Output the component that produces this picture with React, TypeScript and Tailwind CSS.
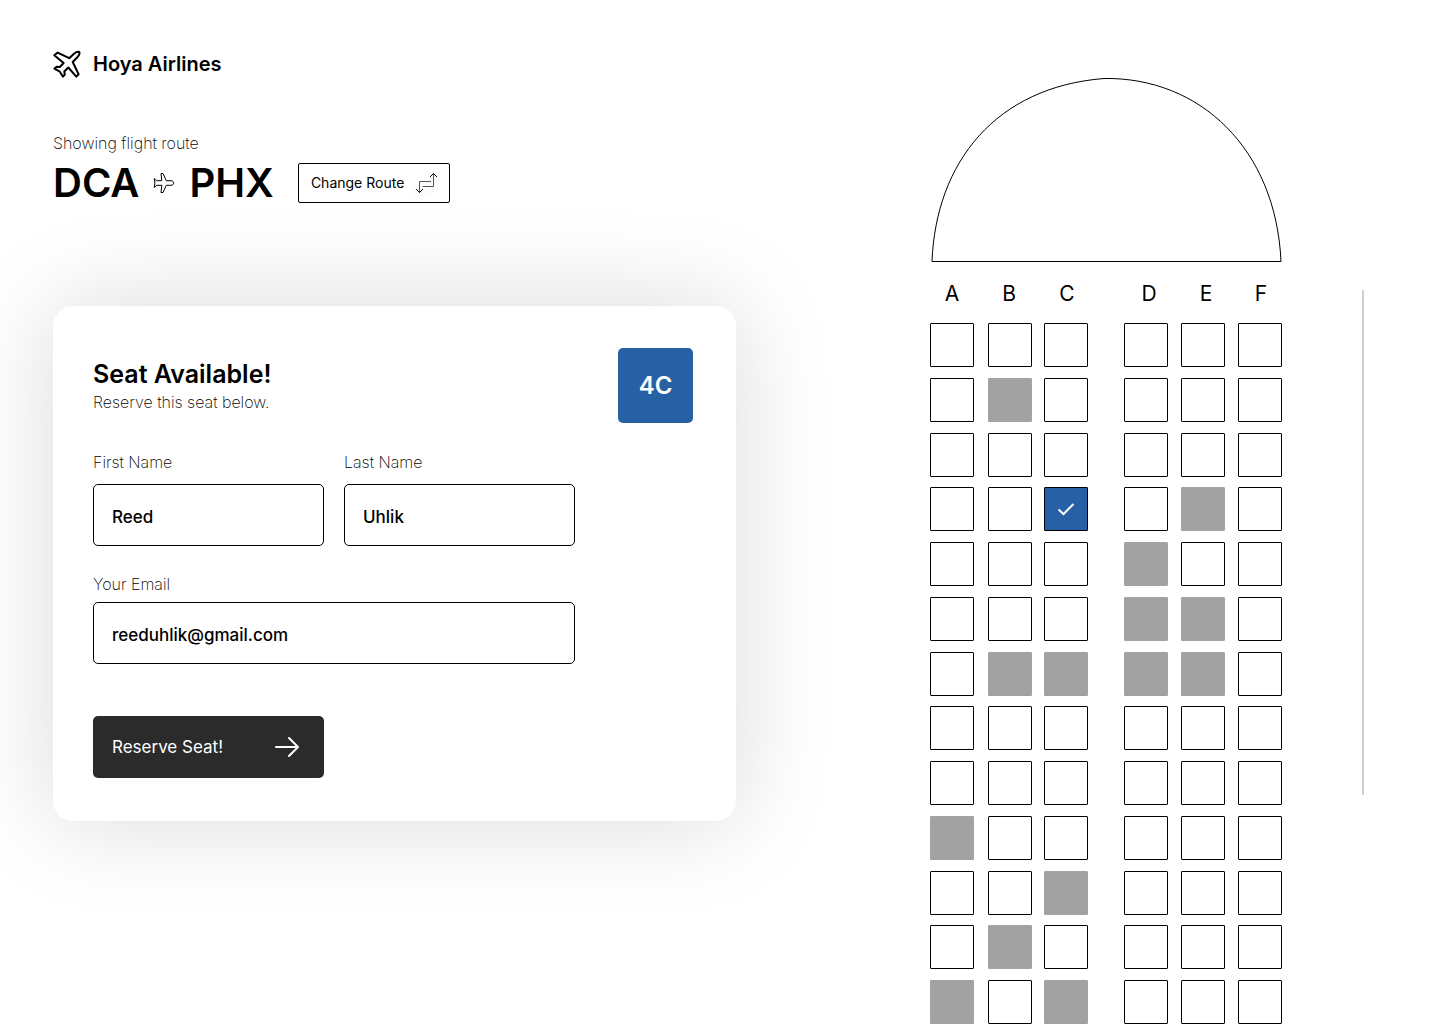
import { useState } from "react";

const SANS = "font-['Inter',sans-serif]";

const TAKEN = new Set(["2B", "4E", "5D", "6D", "6E", "7B", "7C", "7D", "7E", "10A", "11C", "12B", "13A", "13C"]);
const ROWS = Array.from({ length: 13 }, (_, i) => i + 1);
const COLUMNS = ["A", "B", "C", "D", "E", "F"];

function LogoPlane() {
  return (
    <svg viewBox="0 0 28 28" className="size-7" fill="none" stroke="currentColor" strokeWidth="2" strokeLinejoin="round" aria-hidden="true">
      <path d="M1.3 5.2 4.6 2.6 16.2 8.2 21 3.7C22.8 2.2 25.400 1.600 26.200 2 26.700 2.900 26.300 5 24.800 6.700L19.700 12 25.600 24.200 23.300 26.600 15.300 17.500 11.300 21.500 11.800 24.600 10 26.600 6.800 21.700 1.500 18.600 3.600 16.800 6.800 17 10.600 13Z" />
    </svg>
  );
}

function RoutePlane() {
  return (
    <svg viewBox="0 0 22 22" className="size-[22px]" fill="none" stroke="currentColor" strokeWidth="1" strokeLinejoin="round" aria-hidden="true">
      <path d="M8 1.5h2l3.300 7.200h4.700c1.500 0 2.700 1.200 2.700 2.300s-1.200 2.300-2.700 2.300h-4.700L10 20.500H8l.8-7.200H3.500L1.300 15.500 1.900 11 1.300 6.500 3.500 8.700h5.300z" />
    </svg>
  );
}

function Seat({ id, selected, onSelect }: { id: string; selected: boolean; onSelect: (id: string) => void }) {
  const taken = TAKEN.has(id);
  const look = taken
    ? "border-[#a2a2a2] bg-[#a2a2a2]"
    : selected
      ? "border-black bg-[#2760a4]"
      : "border-black bg-white";
  return (
    <button
      type="button"
      aria-label={`Seat ${id}`}
      aria-pressed={selected}
      disabled={taken}
      onClick={() => onSelect(id)}
      className={`flex size-11 items-center justify-center rounded-[1px] border text-white ${look}`}
    >
      {selected && (
        <svg viewBox="0 0 18 14" className="h-3.5 w-[18px]" fill="none" stroke="currentColor" strokeWidth="2" aria-hidden="true">
          <path d="M1.5 7.5 6.5 12 16.5 2" />
        </svg>
      )}
    </button>
  );
}

function Field({ id, label, value, type, gap }: { id: string; label: string; value: string; type: string; gap: string }) {
  return (
    <div className={`flex flex-col ${gap}`}>
      <label htmlFor={id} className="text-base leading-6 font-extralight">{label}</label>
      <input
        id={id}
        type={type}
        defaultValue={value}
        className="h-[62px] w-full rounded-[5px] border border-black bg-white px-[18px] pt-1 text-[17px] font-medium outline-none"
      />
    </div>
  );
}

export default function App() {
  const [seat, setSeat] = useState("4C");

  return (
    <main className={`flex min-h-screen bg-white pr-[76px] pl-[53px] text-black ${SANS}`}>
      <section className="min-w-0 flex-1 pt-[50px]">
        <header className="flex items-center gap-3">
          <LogoPlane />
          <span className="text-xl leading-7 font-semibold">Hoya Airlines</span>
        </header>

        <p className="mt-[53px] text-base leading-6 font-extralight">Showing flight route</p>
        <div className="flex h-[56px] items-center">
          <h1 className="flex items-center gap-3.5 text-[40px] leading-[56px] font-semibold">
            DCA
            <RoutePlane />
            PHX
          </h1>
          <button type="button" className="ml-6 flex h-10 w-[152px] items-center justify-between rounded-[2px] border border-black px-3 text-sm">
            Change Route
            <svg viewBox="0 0 22 22" className="size-[22px] drop-shadow-md" fill="none" stroke="currentColor" aria-hidden="true">
              <path d="M18.5 1.5v13h-11M4.500 20.500v-11H16" stroke="#555" />
              <path d="M15 5 18.500 1.500 22 5M1 17 4.500 20.500 8 17" />
            </svg>
          </button>
        </div>

        <form
          onSubmit={(event) => event.preventDefault()}
          className="mt-[95px] rounded-[20px] bg-white px-10 pt-[42px] pb-[43px] shadow-[0_0_100px_rgba(0,0,0,0.15)]"
        >
          <div className="flex items-start justify-between pr-[3px]">
            <div className="pt-2.5">
              <h2 className="text-[25px] leading-8 font-semibold">Seat Available!</h2>
              <p className="text-base leading-6 font-extralight">Reserve this seat below.</p>
            </div>
            <output className="flex size-[75px] items-center justify-center rounded-[5px] bg-[#2760a4] text-2xl font-semibold text-white">
              {seat}
            </output>
          </div>

          <div className="mt-[27px] max-w-[482px]">
            <div className="grid grid-cols-2 gap-5">
              <Field id="first" label="First Name" value="Reed" type="text" gap="gap-2.5" />
              <Field id="last" label="Last Name" value="Uhlik" type="text" gap="gap-2.5" />
            </div>
            <div className="mt-[26px]">
              <Field id="email" label="Your Email" value="reeduhlik@gmail.com" type="email" gap="gap-1.5" />
            </div>
          </div>

          <button type="submit" className="mt-[52px] flex h-[62px] w-[231px] items-center justify-between rounded-[5px] bg-[#2b2b2b] pr-6 pl-[19px] text-[17px] leading-7 text-white">
            Reserve Seat!
            <svg viewBox="0 0 26 22" className="h-[22px] w-[26px]" fill="none" stroke="currentColor" strokeWidth="2" strokeLinecap="round" strokeLinejoin="round" aria-hidden="true">
              <path d="M2 11h22M15 2l9 9-9 9" />
            </svg>
          </button>
        </form>
      </section>

      <section aria-label="Seat map" className="ml-[194px] flex shrink-0 flex-col pt-[77px]">
        <svg viewBox="0 0 352 186" className="h-[186px] w-[352px]" fill="none" stroke="black" aria-hidden="true">
          <path d="M2 184.5C6 85 66 10 174 1.500 270 0 346 72 351 184.500Z" />
        </svg>
        <div className="mt-[17px] grid grid-cols-[57px_58px_82px_57px_55px_43px] text-center text-[21px] leading-7">
          {COLUMNS.map((col) => (
            <span key={col} className="w-11">{col}</span>
          ))}
        </div>
        <div className="mt-[15px] flex flex-1 flex-col justify-between gap-2.5">
          {ROWS.map((row) => (
            <div key={row} className="grid grid-cols-[58px_56px_80px_57px_57px_44px]">
              {COLUMNS.map((col) => (
                <Seat key={col} id={`${row}${col}`} selected={seat === `${row}${col}`} onSelect={setSeat} />
              ))}
            </div>
          ))}
        </div>
      </section>

      <div aria-hidden="true" className="mt-[290px] ml-20 h-[505px] w-0.5 shrink-0 bg-[#d0d0d0]" />
    </main>
  );
}
